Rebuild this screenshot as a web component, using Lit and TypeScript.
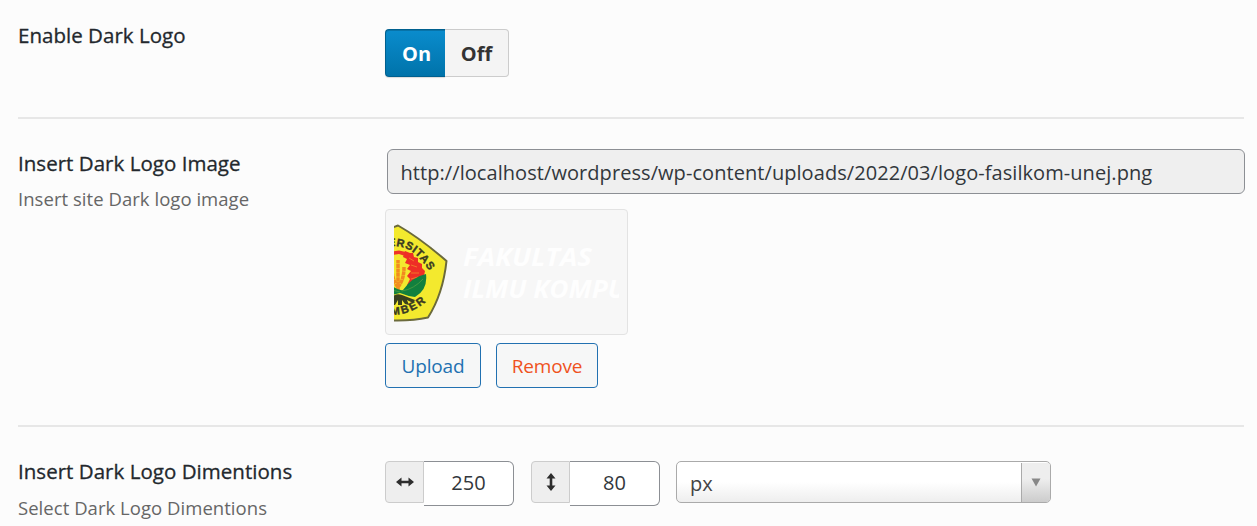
import { LitElement, html, css, svg } from "lit";
import { customElement } from "lit/decorators.js";

@customElement("logo-preview")
class LogoPreview extends LitElement {
  static styles = css`
    :host { display: block; width: 225px; height: 108px; }
    svg { display: block; }
    .ring { font: bold 11px "Liberation Sans", sans-serif; fill: #3a3a22; stroke: #3a3a22; stroke-width: .4px; }
    .name { font: italic 700 25px "Open Sans", sans-serif; fill: #fefefe; }
  `;
  render() {
    return html`<svg width="225" height="108" viewBox="0 0 225 108">
      <defs>
        <path id="top" d="M-10 28.500Q6 26.500 17 33Q25 38 34 51" />
        <path id="bottom" d="M-6 97Q18 98 36 80" />
      </defs>
      <path d="M-10 13Q-3 10 4 7.500Q26 20 52.500 43Q49 76 34 99.500Q16 103.500 -10 102Z" fill="#f3e92e" stroke="#6b6a3c" stroke-width="2" stroke-linejoin="round" />
      <text class="ring"><textPath href="#top" startOffset="4" textLength="51" lengthAdjust="spacing">ERSITAS</textPath></text>
      <path d="M-1 33.500L5 32.500L12 34L11 38L5 36L-1 37Z" fill="#ee3428" />
      <path d="M11 33L16 35L19 35L20 39L24 40L24 44L28 46L28 50L31 53L30 58L27 62L21 65L13 67L16 61L13 58L17 53L13 51L16 47L11 45L13 41L9 39Z" fill="#ee2f26" />
      <path d="M15 40L20 43M17 47L23 49M17 55L25 55M17 61L24 59" fill="none" stroke="#f3a32e" stroke-width=".6" />
      <path d="M4 72V42M4 69Q10 62 10 49M4 69Q-2 62 -2 50" fill="none" stroke="#f28b20" stroke-width="3.500" stroke-dasharray="4 .4" />
      <path d="M-2 68Q5 73 9 72Q18 59 32 56Q34 72 21 79Q13 78 6 75L-2 77Z" fill="#12803e" />
      <path d="M8 73Q20 71 29 61M-2 72L6 74" fill="none" stroke="#4f9e42" stroke-width=".8" />
      <path d="M-2 79Q2 75 8 77L21 82L19 85L13 82L15 87L11 86L8 82L8 87L4 87L4 82L1 87L-2 87Z" fill="#39401f" />
      <text class="ring"><textPath href="#bottom" startOffset="3" textLength="38" lengthAdjust="spacing">MBER</textPath></text>
      <text class="name" x="69" y="47.500" textLength="129" lengthAdjust="spacingAndGlyphs">FAKULTAS</text>
      <text class="name" x="69" y="79.500" textLength="163" lengthAdjust="spacingAndGlyphs">ILMU KOMPU</text>
    </svg>`;
  }
}

@customElement("app-root")
class AppRoot extends LitElement {
  static styles = css`
    :host {
      display: block; width: 1257px; height: 526px; overflow: hidden; box-sizing: border-box;
      background: #fcfcfc; padding: 0 13px 0 18px; color: #32373c;
      font-family: "Open Sans", "Noto Sans", sans-serif; font-size: 20px;
    }
    * { box-sizing: border-box; }
    .row { display: grid; grid-template-columns: 367px 1fr; border-bottom: 2px solid #e7e7e7; }
    .enable { height: 119px; }
    .image { height: 308px; }
    .dims { border: 0; }
    .label { padding-top: 20px; white-space: nowrap; }
    .title { font-size: 20.5px; line-height: 30px; font-weight: 500; color: #23282d; letter-spacing: 0.03px; -webkit-text-stroke: 0.3px #23282d; }
    .hint { font-size: 18.5px; line-height: 28px; color: #666; margin-top: 8px; letter-spacing: 0.04px; }
    .image .hint { margin-top: 7px; }
    .image .label, .dims .label { padding-top: 29px; }
    .switch { display: flex; margin-top: 29px; height: 48px; width: 124px; font-weight: 700; line-height: 48px; text-align: center; font-size: 20px; }
    .on { width: 60px; padding-left: 2px; color: #fff; border: 1px solid #00608f; border-right: 0; border-radius: 4px 0 0 4px; background: linear-gradient(#0a8ccd, #0073aa); box-shadow: inset 0 1px 0 #0873a8, 0 1px 1px #0002; }
    .off { width: 64px; border: 1px solid #ccc; border-left: 0; border-radius: 0 4px 4px 0; background: #f4f4f4; color: #333; }
    .url { margin: 30px -1px 0 2px; height: 45px; border: 1px solid #8c8f94; border-radius: 6px; background: #efefef; padding-left: 12.5px; line-height: 45px; white-space: nowrap; color: #32373c; letter-spacing: 0.065px; }
    .shot { width: 243px; height: 126px; border: 1px solid #e3e3e3; border-radius: 4px; background: #f7f7f7; padding: 8px; margin-top: 15px; overflow: hidden; }
    .buttons { display: flex; gap: 15px; margin-top: 8px; }
    .btn { height: 45px; line-height: 44px; border: 1px solid #2271b1; border-radius: 4px; background: #f6f7f7; color: #2271b1; text-align: center; width: 96px; font-size: 19px; letter-spacing: -0.15px; }
    .remove { width: 102px; color: #ef521d; }
    .fields { display: flex; margin-top: 34px; align-items: flex-start; }
    .addon { width: 39px; height: 42px; border: 1px solid #ccc; border-radius: 4px 0 0 4px; background: #eee; display: flex; align-items: center; justify-content: center; }
    .num { width: 90px; height: 45px; border: 1px solid #8c8f94; border-left: 0; border-radius: 0 6px 6px 0; background: #fff; text-align: center; line-height: 42px; margin-right: 17px; font-size: 20px; }
    .last { margin-right: 16px; }
    .select { width: 375px; height: 42px; border: 1px solid #aaa; border-radius: 5px; background: linear-gradient(#fff 50%, #eee); display: flex; justify-content: space-between; overflow: hidden; padding-top: 1px; line-height: 42px; padding-left: 13px; color: #444; }
    .arrow { width: 29px; border-left: 1px solid #aaa; background: linear-gradient(#eee 40%, #ccc); display: flex; justify-content: center; padding-top: 15px; }
    svg { display: block; }
  `;
  render() {
    const arrows = svg`<path d="M0 6L5.500 1.500V4.700H12.500V1.500L18 6L12.500 10.500V7.300H5.500V10.500Z" fill="#2d2d2d"/>`;
    return html`
      <div class="row enable">
        <div class="label"><div class="title">Enable Dark Logo</div></div>
        <div><div class="switch"><div class="on">On</div><div class="off">Off</div></div></div>
      </div>
      <div class="row image">
        <div class="label"><div class="title">Insert Dark Logo Image</div><div class="hint">Insert site Dark logo image</div></div>
        <div>
          <div class="url">http://localhost/wordpress/wp-content/uploads/2022/03/logo-fasilkom-unej.png</div>
          <div class="shot"><logo-preview></logo-preview></div>
          <div class="buttons"><div class="btn">Upload</div><div class="btn remove">Remove</div></div>
        </div>
      </div>
      <div class="row dims">
        <div class="label"><div class="title">Insert Dark Logo Dimentions</div><div class="hint">Select Dark Logo Dimentions</div></div>
        <div class="fields">
          <div class="addon"><svg width="18" height="12" viewBox="0 0 18 12">${arrows}</svg></div>
          <div class="num">250</div>
          <div class="addon"><svg width="12" height="18" viewBox="0 0 12 18"><g transform="translate(12 0) rotate(90)">${arrows}</g></svg></div>
          <div class="num last">80</div>
          <div class="select"><span>px</span><div class="arrow"><svg width="10" height="9" viewBox="0 0 10 9"><path d="M.5 .5H9.500L5 8.500Z" fill="#888"/></svg></div></div>
        </div>
      </div>`;
  }
}
